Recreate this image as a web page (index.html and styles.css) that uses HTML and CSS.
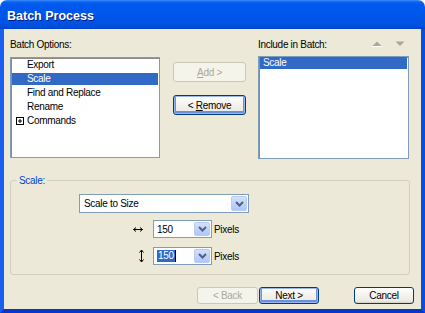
FILE: index.html
```html
<!DOCTYPE html>
<html lang="en">
<head>
    <meta charset="UTF-8">
    <title>Batch Process</title>
    <link rel="stylesheet" href="styles.css">
</head>
<body>
    <div class="window">
        <div class="titlebar">
            <span class="title">Batch Process</span>
        </div>

        <div class="client">
            <div class="top">
                <!-- Available options -->
                <div class="col-left">
                    <div class="label-row">Batch Options:</div>
                    <div class="listbox list-options">
                        <div class="item">Export</div>
                        <div class="item selected">Scale</div>
                        <div class="item">Find and Replace</div>
                        <div class="item">Rename</div>
                        <div class="item tree">
                            <svg class="expander" width="9" height="9" viewBox="0 0 9 9">
                                <rect x="0.5" y="0.5" width="7" height="7" fill="#fff" stroke="#000"/>
                                <path d="M2 4h4M4 2v4" stroke="#000" stroke-width="1"/>
                            </svg>
                            Commands
                        </div>
                    </div>
                </div>

                <!-- Add / remove -->
                <div class="col-mid">
                    <button class="btn disabled"><u>A</u>dd &gt;</button>
                    <button class="btn default">&lt; <u>R</u>emove</button>
                </div>

                <!-- Batch contents -->
                <div class="col-right">
                    <div class="label-row">
                        <span>Include in Batch:</span>
                        <span class="order-arrows">
                            <svg width="10" height="6" viewBox="0 0 10 6">
                                <path d="M5 0.5L9.5 5H0.5z" fill="#aca899"/>
                                <path d="M0.5 5.5H9.5" stroke="#fff"/>
                            </svg>
                            <svg width="10" height="6" viewBox="0 0 10 6">
                                <path d="M0.5 0.5H9.5L5 5z" fill="#aca899"/>
                            </svg>
                        </span>
                    </div>
                    <div class="listbox list-batch">
                        <div class="item selected">Scale</div>
                    </div>
                </div>
            </div>

            <fieldset class="group">
                <legend>Scale:</legend>

                <div class="combo combo-mode">
                    <span class="combo-text">Scale to Size</span>
                    <span class="combo-btn">
                        <svg width="9" height="6" viewBox="0 0 9 6"><path d="M1 1l3.5 3.5L8 1" fill="none" stroke="#4d6185" stroke-width="2"/></svg>
                    </span>
                </div>

                <div class="dim-row">
                    <svg class="dim-icon" width="20" height="18" viewBox="0 0 20 18">
                        <path d="M2.5 9.5h9" stroke="#000"/>
                        <path d="M5 7.5L2.5 9.5L5 11.5M9 7.5L11.5 9.5L9 11.5" fill="none" stroke="#000"/>
                    </svg>
                    <div class="combo combo-size">
                        <span class="combo-text">150</span>
                        <span class="combo-btn">
                            <svg width="9" height="6" viewBox="0 0 9 6"><path d="M1 1l3.5 3.5L8 1" fill="none" stroke="#4d6185" stroke-width="2"/></svg>
                        </span>
                    </div>
                    <span class="unit">Pixels</span>
                </div>

                <div class="dim-row">
                    <svg class="dim-icon" width="20" height="18" viewBox="0 0 20 18">
                        <path d="M10.5 3v12" stroke="#000"/>
                        <path d="M8.5 5.5L10.5 3L12.5 5.5M8.5 12.5L10.5 15L12.5 12.5" fill="none" stroke="#000"/>
                    </svg>
                    <div class="combo combo-size">
                        <span class="combo-text"><span class="sel">150</span><span class="caret"></span></span>
                        <span class="combo-btn">
                            <svg width="9" height="6" viewBox="0 0 9 6"><path d="M1 1l3.5 3.5L8 1" fill="none" stroke="#4d6185" stroke-width="2"/></svg>
                        </span>
                    </div>
                    <span class="unit">Pixels</span>
                </div>
            </fieldset>

            <div class="footer">
                <button class="btn disabled btn-back">&lt; Back</button>
                <button class="btn default btn-next">Next &gt;</button>
                <button class="btn btn-cancel">Cancel</button>
            </div>
        </div>
    </div>
</body>
</html>
```

FILE: styles.css
```css
* {
    margin: 0;
    padding: 0;
    box-sizing: border-box;
}

body {
    background: #fff;
    font-family: "Liberation Sans", Arial, sans-serif;
    font-size: 10px;
    letter-spacing: -0.3px;
    color: #000;
    overflow: hidden;
}

.window {
    width: 425px;
    height: 313px;
    display: flex;
    flex-direction: column;
    border-radius: 7px 7px 0 0;
    overflow: hidden;
}

/* Title bar */
.titlebar {
    height: 29px;
    flex: none;
    display: flex;
    align-items: center;
    padding: 2px 0 0 7px;
    background: linear-gradient(#3d8dfb 0, #0a62f0 2px, #0058ee 5px, #0057eb 45%, #0054e6 75%, #004fdc 90%, #0042c8 100%);
}

.title {
    color: #fff;
    font-weight: bold;
    font-size: 12.5px;
    letter-spacing: 0;
    text-shadow: 1px 1px 0 #0a1883;
}

/* Client area */
.client {
    flex: 1;
    display: flex;
    flex-direction: column;
    background: #ece9d8;
    border: 4px solid #0a4ee0;
    border-top: none;
    border-left-color: #1a5ff0;
    border-bottom-color: #0836c8;
    padding-top: 9px;
}

.top {
    display: flex;
    padding-left: 6px;
}

.label-row {
    height: 14px;
    line-height: 14px;
    display: flex;
    justify-content: space-between;
    align-items: center;
}

.col-left {
    width: 150px;
}

.col-mid {
    width: 73px;
    margin-left: 13px;
    padding-top: 24px;
    display: flex;
    flex-direction: column;
    gap: 13px;
}

.col-right {
    width: 151px;
    margin-left: 12px;
}

.order-arrows {
    display: flex;
    gap: 13px;
    padding-right: 4px;
    margin-top: -2px;
}

.listbox {
    background: #fff;
    border: 1px solid #7f9db9;
    box-shadow: inset 1px 1px 0 #8a8a8a;
}

.list-options {
    height: 101px;
    margin-top: 5px;
    padding: 1px 1px 0 1px;
}

.list-batch {
    height: 103px;
    margin-top: 4px;
    padding: 0 1px;
}

.item {
    height: 12px;
    line-height: 12px;
    margin-bottom: 2px;
    white-space: nowrap;
}

.list-options .item {
    padding-left: 15px;
}

.list-options .item.tree {
    padding-left: 4px;
    display: flex;
    align-items: center;
}

.expander {
    margin-right: 2px;
}

.list-batch .item {
    padding-left: 3px;
}

.item.selected {
    background: #316ac5;
    color: #fff;
}

/* Buttons */
.btn {
    font-family: inherit;
    font-size: 10px;
    letter-spacing: -0.3px;
    height: 20px;
    border: 1px solid #003c74;
    border-radius: 3px;
    background: linear-gradient(#ffffff 0, #f5f4ef 40%, #ecebe6 85%, #d6d0c5 100%);
    color: #000;
}

.btn u {
    text-decoration: underline;
}

.btn.default {
    box-shadow: inset 0 0 0 1px #9bb7ee, inset 0 -1px 0 2px #6d8fe0;
}

.btn.disabled {
    border-color: #c9c7ba;
    background: #f5f4ea;
    color: #aca899;
}

/* Group box */
.group {
    margin: 15px 11px 0 6px;
    border: 1px solid #d0d0bf;
    border-radius: 3px;
    padding: 7px 0 9px 0;
}

.group legend {
    margin-left: 6px;
    padding: 0 2px;
    line-height: 13px;
    color: #0046d5;
}

.combo {
    background: #fff;
    border: 1px solid #7f9db9;
    display: flex;
    align-items: center;
    padding: 1px;
}

.combo-text {
    flex: 1;
    padding-left: 3px;
    display: flex;
    align-items: center;
}

.combo-btn {
    width: 16px;
    align-self: stretch;
    display: flex;
    align-items: center;
    justify-content: center;
    border: 1px solid #b9cbf4;
    border-radius: 2px;
    background: linear-gradient(#d3e0fd, #c1d3fb 50%, #b1c6f7);
}

.combo-mode {
    width: 170px;
    height: 19px;
    margin-left: 68px;
}

.dim-row {
    display: flex;
    align-items: center;
    margin-left: 120px;
    margin-top: 7px;
}

.dim-row + .dim-row {
    margin-top: 9px;
}

.dim-icon {
    margin-right: 2px;
}

.combo-size {
    width: 59px;
    height: 18px;
}

.combo-size .combo-text {
    padding-left: 2px;
}

.sel {
    background: #316ac5;
    color: #fff;
    line-height: 12px;
    padding: 0 1px;
}

.caret {
    width: 1px;
    height: 12px;
    background: #000;
}

.unit {
    margin-left: 2px;
}

/* Footer */
.footer {
    display: flex;
    margin-top: 12px;
    padding-left: 193px;
}

.footer .btn {
    height: 17px;
}

.btn-back {
    width: 61px;
}

.btn-next {
    width: 60px;
    margin-left: 1px;
}

.btn-cancel {
    width: 60px;
    margin-left: 35px;
}
```
